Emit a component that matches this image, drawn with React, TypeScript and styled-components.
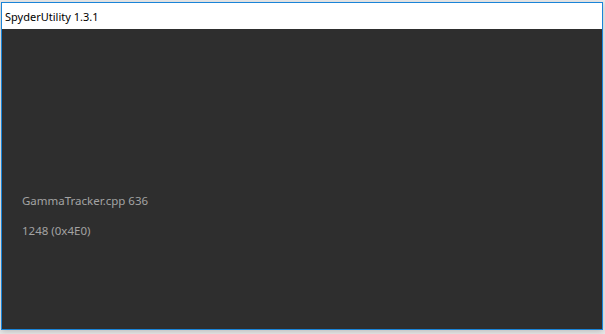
import styled, { createGlobalStyle } from 'styled-components'

const GlobalStyle = createGlobalStyle`
  html, body {
    margin: 0;
    padding: 0;
    background: #e9e9e9;
    overflow: hidden;
  }
  body {
    font-family: "Noto Sans", "Open Sans", sans-serif;
  }
`

/* ── Desktop behind the window ── */
const Desktop = styled.div`
  width: 605px;
  height: 334px;
  padding: 2px 0 0 1px;
  box-sizing: border-box;
`

/* ── Window ── */
const Window = styled.div`
  width: 602px;
  height: 328px;
  box-sizing: border-box;
  border: 1px solid #1a84d8;
  display: flex;
  flex-direction: column;
  box-shadow: 0 2px 6px rgba(0, 0, 0, 0.18);
`

const TitleBar = styled.div`
  height: 26px;
  flex-shrink: 0;
  background: #ffffff;
  display: flex;
  align-items: center;
  padding-left: 3px;
  font-size: 11px;
  color: #000000;
`

const Body = styled.div`
  flex: 1;
  background: #2e2e2e;
  padding: 164px 0 0 20px;
  display: flex;
  flex-direction: column;
  gap: 14px;
`

const InfoLine = styled.div`
  font-size: 11.5px;
  line-height: 16px;
  color: #a3a3a3;
`

export default function App() {
  return (
    <Desktop>
      <GlobalStyle />
      <Window>
        <TitleBar>SpyderUtility 1.3.1</TitleBar>
        <Body>
          <InfoLine>GammaTracker.cpp 636</InfoLine>
          <InfoLine>1248 (0x4E0)</InfoLine>
        </Body>
      </Window>
    </Desktop>
  )
}
